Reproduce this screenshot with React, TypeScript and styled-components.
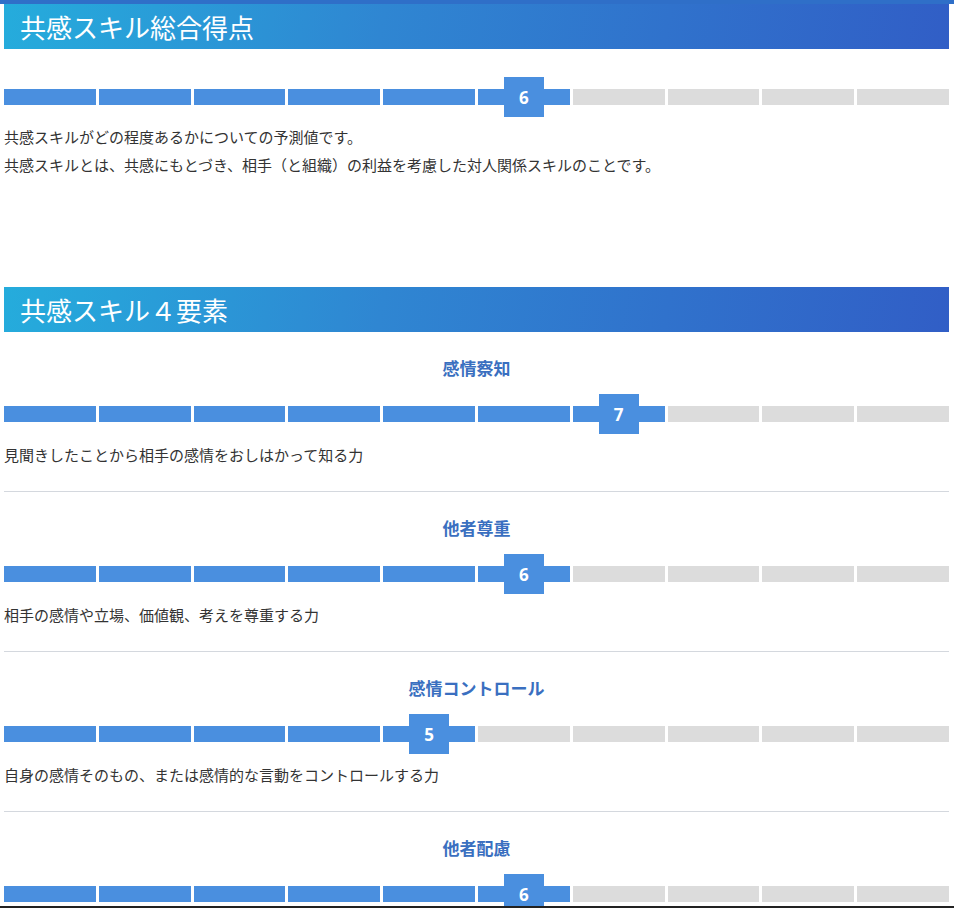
import styled, { createGlobalStyle } from 'styled-components';

const GlobalStyle = createGlobalStyle`
  body {
    margin: 0;
    font-family: "Noto Sans CJK JP", "Noto Sans", sans-serif;
    color: #333;
    background: #fff;
  }
`;

const Page = styled.div`
  padding: 0 5px 0 4px;
  border-top: 4px solid #2f6fc8;
`;

const SectionHeader = styled.h2<{ $top: number }>`
  margin: ${(p) => p.$top}px 0 0;
  height: 45px;
  padding-left: 16px;
  display: flex;
  align-items: center;
  font-size: 26px;
  font-weight: 400;
  color: #fff;
  background: linear-gradient(100deg, #25acdc 0%, #2f86d2 40%, #315ec6 100%);
`;

const BarRow = styled.div<{ $top: number }>`
  margin-top: ${(p) => p.$top}px;
  height: 40px;
  display: grid;
  grid-template-columns: repeat(10, 1fr);
  gap: 3px;
  align-items: center;
`;

const Segment = styled.div<{ $on: boolean }>`
  position: relative;
  height: 16px;
  background: ${(p) => (p.$on ? '#4a8fdf' : '#dcdcdc')};
`;

const Badge = styled.div`
  position: absolute;
  left: 50%;
  top: 50%;
  width: 40px;
  height: 40px;
  transform: translate(-50%, -50%);
  background: #4a8fdf;
  color: #fff;
  font-family: "Open Sans", "Noto Sans", sans-serif;
  font-weight: 700;
  font-size: 17px;
  display: flex;
  align-items: center;
  justify-content: center;
`;

const Text = styled.p<{ $top: number }>`
  margin: ${(p) => p.$top}px 0 0;
  font-size: 15px;
  line-height: 28px;
`;

const Item = styled.div`
  padding-bottom: 22px;
  border-bottom: 1px solid #d4d8de;
`;

const ItemTitle = styled.h3`
  margin: 24px 0 0;
  text-align: center;
  font-size: 17px;
  line-height: 24px;
  font-weight: 700;
  color: #3a6fc0;
`;

const BottomLine = styled.div`
  position: fixed;
  left: 0;
  right: 0;
  bottom: 0;
  height: 2px;
  background: #222;
`;

const Bar = ({ score, top }: { score: number; top: number }) => (
  <BarRow $top={top}>
    {Array.from({ length: 10 }, (_, i) => (
      <Segment key={i} $on={i < score}>
        {i === score - 1 && <Badge>{score}</Badge>}
      </Segment>
    ))}
  </BarRow>
);

const items = [
  { title: '感情察知', score: 7, desc: '見聞きしたことから相手の感情をおしはかって知る力' },
  { title: '他者尊重', score: 6, desc: '相手の感情や立場、価値観、考えを尊重する力' },
  { title: '感情コントロール', score: 5, desc: '自身の感情そのもの、または感情的な言動をコントロールする力' },
  { title: '他者配慮', score: 6, desc: '相手の感情や立場を考慮して行動する力' },
];

export default function App() {
  return (
    <Page>
      <GlobalStyle />
      <SectionHeader $top={0}>共感スキル総合得点</SectionHeader>
      <Bar score={6} top={28} />
      <Text $top={6}>
        共感スキルがどの程度あるかについての予測値です。
        <br />
        共感スキルとは、共感にもとづき、相手（と組織）の利益を考慮した対人関係スキルのことです。
      </Text>
      <SectionHeader $top={108}>共感スキル４要素</SectionHeader>
      {items.map((it) => (
        <Item key={it.title}>
          <ItemTitle>{it.title}</ItemTitle>
          <Bar score={it.score} top={14} />
          <Text $top={7}>{it.desc}</Text>
        </Item>
      ))}
      <BottomLine />
    </Page>
  );
}
